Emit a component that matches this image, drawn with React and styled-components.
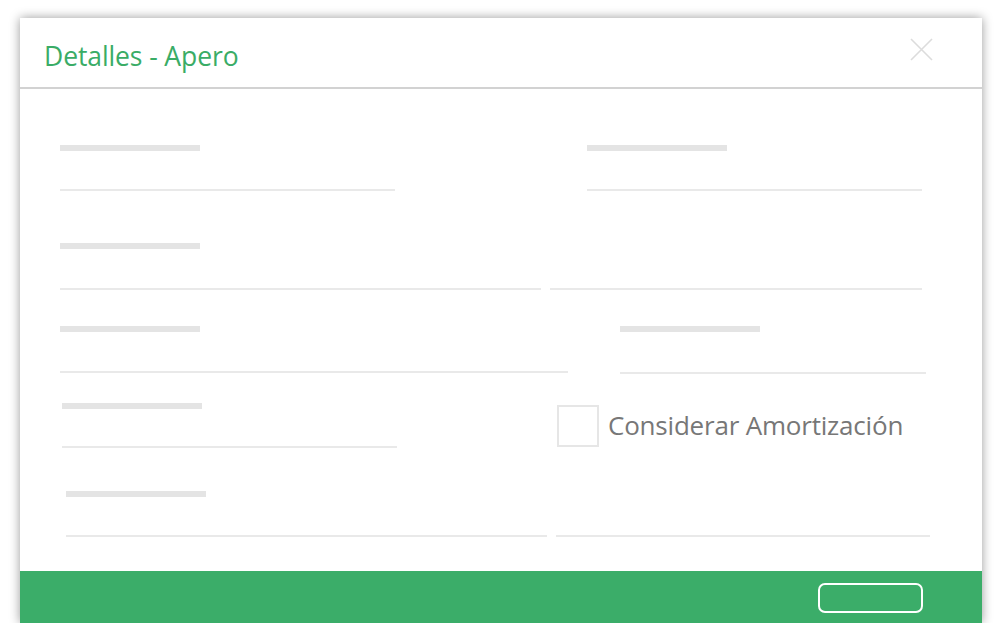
import React from "react";
import styled, { createGlobalStyle } from "styled-components";

const GlobalStyle = createGlobalStyle`
  body {
    margin: 0;
    background: #ffffff;
    font-family: "Open Sans", "Liberation Sans", sans-serif;
  }
`;

const Page = styled.div`
  padding: 18px 18px 0 20px;
`;

const Dialog = styled.div`
  width: 962px;
  height: 605px;
  background: #fff;
  box-shadow: 0 0 10px rgba(0, 0, 0, 0.4);
  display: flex;
  flex-direction: column;
`;

const Header = styled.div`
  height: 71px;
  border-bottom: 2px solid #d2d2d2;
  display: flex;
  align-items: center;
  justify-content: space-between;
  padding: 0 49px 0 24px;
  box-sizing: border-box;
  flex-shrink: 0;
`;

const Title = styled.h1`
  margin: 0;
  font-size: 26.5px;
  font-weight: 400;
  color: #3aac66;
  letter-spacing: -0.1px;
  padding-top: 6px;
`;

const Close = styled.button`
  border: none;
  background: none;
  padding: 0;
  width: 23px;
  height: 23px;
  margin-top: -6px;
  cursor: pointer;
`;

const Body = styled.div`
  flex: 1;
`;

const Row = styled.div`
  display: flex;
  align-items: flex-start;
  margin-top: ${(p) => p.$mt}px;
`;

const Field = styled.div`
  display: flex;
  flex-direction: column;
  width: ${(p) => p.$w}px;
  margin-left: ${(p) => p.$ml}px;
`;

const LabelBar = styled.div`
  width: 140px;
  height: 6px;
  background: ${(p) => (p.$empty ? "transparent" : "#e4e4e4")};
  margin-bottom: ${(p) => p.$gap}px;
`;

const Line = styled.div`
  height: 2px;
  background: #e9e9e9;
`;

const CheckRow = styled.label`
  display: flex;
  align-items: center;
  margin-left: ${(p) => p.$ml}px;
  margin-top: 2px;
  cursor: pointer;
`;

const Box = styled.span`
  width: 42px;
  height: 42px;
  box-sizing: border-box;
  border: 2px solid #e6e6e6;
  flex-shrink: 0;
`;

const CheckText = styled.span`
  margin-left: 9px;
  margin-top: -3px;
  font-size: 26px;
  color: #777777;
  letter-spacing: -0.2px;
`;

const Footer = styled.div`
  height: 52px;
  background: #3bad69;
  display: flex;
  justify-content: flex-end;
  padding: 12px 59px 0 0;
  box-sizing: border-box;
  flex-shrink: 0;
`;

const FooterButton = styled.button`
  width: 105px;
  height: 30px;
  box-sizing: border-box;
  border: 2px solid #ffffff;
  border-radius: 7px;
  background: transparent;
  cursor: pointer;
`;

const Input = ({ ml, w, gap = 39, empty }) => (
  <Field $ml={ml} $w={w}>
    <LabelBar $gap={gap} $empty={empty} />
    <Line />
  </Field>
);

export default function App() {
  return (
    <>
      <GlobalStyle />
      <Page>
        <Dialog>
          <Header>
            <Title>Detalles - Apero</Title>
            <Close aria-label="Cerrar">
              <svg width="23" height="23" viewBox="0 0 23 23">
                <path d="M1 1 L22 22 M22 1 L1 22" stroke="#dcdcdc" strokeWidth="1.6" />
              </svg>
            </Close>
          </Header>
          <Body>
            <Row $mt={56}>
              <Input ml={40} w={335} gap={38} />
              <Input ml={192} w={335} gap={38} />
            </Row>
            <Row $mt={52}>
              <Input ml={40} w={481} gap={39} />
              <Input ml={9} w={372} gap={39} empty />
            </Row>
            <Row $mt={36}>
              <Input ml={40} w={508} gap={39} />
              <Input ml={52} w={306} gap={40} />
            </Row>
            <Row $mt={29}>
              <Input ml={42} w={335} gap={37} />
              <CheckRow $ml={160}>
                <Box />
                <CheckText>Considerar Amortización</CheckText>
              </CheckRow>
            </Row>
            <Row $mt={43}>
              <Input ml={46} w={481} gap={38} />
              <Input ml={9} w={374} gap={38} empty />
            </Row>
          </Body>
          <Footer>
            <FooterButton aria-label="Aceptar" />
          </Footer>
        </Dialog>
      </Page>
    </>
  );
}
